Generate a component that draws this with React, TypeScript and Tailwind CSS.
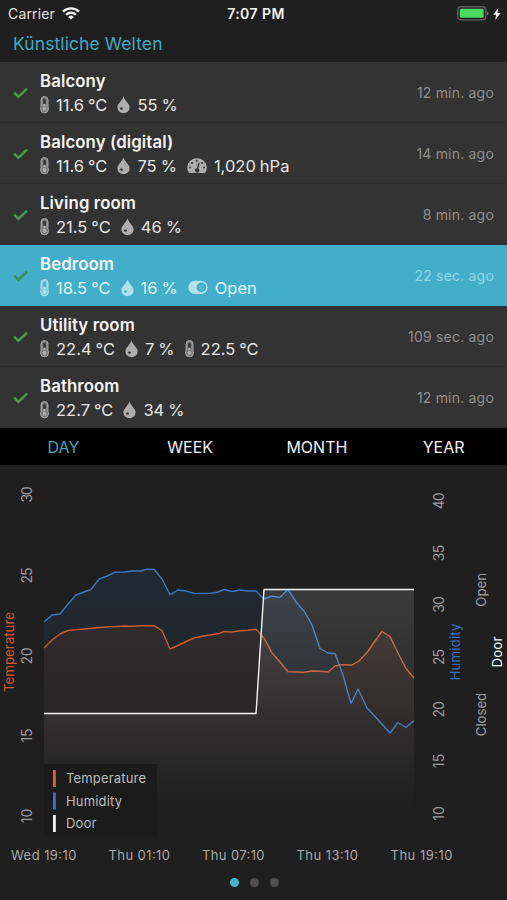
import React from "react";

type Kind = "temp" | "drop" | "gauge" | "toggle";
type Reading = { kind: Kind; text: string };
type Room = { name: string; ago: string; readings: Reading[]; selected?: boolean };

const rooms: Room[] = [
  { name: "Balcony", ago: "12 min. ago", readings: [{ kind: "temp", text: "11.6 °C" }, { kind: "drop", text: "55 %" }] },
  {
    name: "Balcony (digital)",
    ago: "14 min. ago",
    readings: [{ kind: "temp", text: "11.6 °C" }, { kind: "drop", text: "75 %" }, { kind: "gauge", text: "1,020 hPa" }],
  },
  { name: "Living room", ago: "8 min. ago", readings: [{ kind: "temp", text: "21.5 °C" }, { kind: "drop", text: "46 %" }] },
  {
    name: "Bedroom",
    ago: "22 sec. ago",
    selected: true,
    readings: [{ kind: "temp", text: "18.5 °C" }, { kind: "drop", text: "16 %" }, { kind: "toggle", text: "Open" }],
  },
  {
    name: "Utility room",
    ago: "109 sec. ago",
    readings: [{ kind: "temp", text: "22.4 °C" }, { kind: "drop", text: "7 %" }, { kind: "temp", text: "22.5 °C" }],
  },
  { name: "Bathroom", ago: "12 min. ago", readings: [{ kind: "temp", text: "22.7 °C" }, { kind: "drop", text: "34 %" }] },
];

function Icon({ kind, selected }: { kind: Kind; selected?: boolean }) {
  const fg = selected ? "#b4e1eb" : "#adadad";
  const bg = selected ? "#42aeca" : "#333333";
  if (kind === "temp")
    return (
      <svg width="9" height="18" viewBox="0 0 9 18" fill="none">
        <path d="M1 4a3.5 3.5 0 0 1 7 0v6.6a4 4 0 0 1 .4 2.4a3.9 3.9 0 0 1-7.8 0a4 4 0 0 1 .4-2.4z" fill={fg} fillOpacity="0.65" stroke={fg} strokeWidth="0.9" />
        <path d="M4.5 4v3.4" stroke={bg} strokeWidth="2.6" strokeLinecap="round" />
        <path d="M4.5 7.8v4" stroke={fg} strokeWidth="1.8" />
        <circle cx="4.5" cy="12.9" r="2.4" fill={fg} stroke={bg} strokeOpacity="0.5" strokeWidth="0.7" />
      </svg>
    );
  if (kind === "drop")
    return (
      <svg width="13" height="18" viewBox="0 0 13 18">
        <path d="M6.5 0.2C7.3 4.4 12.6 7.4 12.6 11.2a6.1 6.1 0 0 1-12.2 0C.4 7.4 5.7 4.4 6.5.2z" fill={fg} />
        <path d="M3 11.4a1.6 1.6 0 1 0 3 1.4c-.2-1-.8-1.3-1.5-1.2s-1.100.1-1.5-.2z" fill={bg} />
      </svg>
    );
  if (kind === "gauge")
    return (
      <svg width="20" height="18" viewBox="0 0 20 18">
        <path d="M1.8 15.8A9.8 9.4 0 1 1 18.2 15.8Q18 16.1 17.6 16.1H2.4Q2 16.1 1.8 15.8z" fill={fg} />
        <g fill={bg}>
          <circle cx="3" cy="10.6" r="1" />
          <circle cx="5" cy="6" r="1" />
          <circle cx="9.7" cy="3.8" r="1" />
          <circle cx="15" cy="6" r="1" />
          <circle cx="17" cy="10.6" r="1" />
          <path d="M11.5 5.4l1.2.3-1.4 5.8a2.2 2.2 0 1 1-1.4-.3z" />
        </g>
      </svg>
    );
  return (
    <svg width="20" height="18" viewBox="0 0 20 18">
      <rect x="0.3" y="1.8" width="19.4" height="13.2" rx="6.6" fill={fg} />
      <circle cx="13.4" cy="8.4" r="4.8" fill={bg} />
      <circle cx="13.4" cy="8.4" r="3.1" fill={fg} fillOpacity="0.15" />
    </svg>
  );
}

function RoomRow({ room }: { room: Room }) {
  return (
    <div
      className={
        "flex flex-1 items-center border-b pl-[13px] pr-[13px] " +
        (room.selected ? "border-[#42aeca] bg-[#42aeca]" : "border-[#2c2c2c] bg-[#333333]")
      }
    >
      <svg width="16" height="12" viewBox="0 0 16 12" className="mt-px shrink-0" fill="none">
        <path d="M1.2 5.6L5.4 9.8L14 1.6" stroke={room.selected ? "#388e55" : "#479a4e"} strokeWidth="2.5" />
      </svg>
      <div className="ml-[11px] mt-px flex flex-1 flex-col">
        <div className="h-[24px] text-[16.8px] font-semibold leading-[26px] tracking-[0.1px] text-[#f4f4f4]">{room.name}</div>
        <div className="flex h-[25px] items-center gap-[10px]">
          {room.readings.map((r, i) => (
            <div key={i} className="flex items-center gap-[7px]">
              <Icon kind={r.kind} selected={room.selected} />
              <span
                className={
                  "whitespace-nowrap text-[16.5px] leading-[24px] [word-spacing:-0.6px] " +
                  (room.selected ? "text-[#e2f5f9]" : "text-[#e6e6e6]")
                }
              >
                {r.text}
              </span>
            </div>
          ))}
        </div>
      </div>
      <div className={"mt-px text-[14px] tracking-[0.2px] " + (room.selected ? "text-[#94d6e5]" : "text-[#8f8f8f]")}>{room.ago}</div>
    </div>
  );
}

const temperature =
  "44,648 52,640 60,634 68,630.5 76,629.6 84,629 92,628.3 100,627.5 108,626.8 116,626.5 124,626 132,626.3 140,625.8 154,625.6 162,630.5 170,649 178,645.5 186,641.5 194,638 202,636.3 210,635 218,633.8 224,631.5 232,632 240,630.8 248,630.3 256,629.3 264,638 272,653 280,662 288,671.8 304,672.2 312,671 320,671.2 328,672 335,666 342,664.6 352,665 359,661 367,652.5 375,641 382,631.5 390,636.5 398,653 406,668.5 414,678";
const humidity =
  "44,622 52,615 60,614 68,604 76,595 84,592 91,589.5 99,579 107,576 115,572.3 124,572 132,571 140,571 147,569.3 154,569.3 162,579 170,594.8 178,590 186,591 194,593.4 210,593.4 218,592 224,589.5 232,591.5 240,590 248,591 256,591 264,599 272,596 280,597.5 288,589.5 296,602 304,611 312,625 320,648.5 328,653 335,653.5 343,675 351,703.5 358,689 367,708 382,724 390,733 398,722.5 406,727.5 414,720.5";
const door = "44,713.5 256,713.5 264,589.5 414,589.5";

function VLabel({ x, y, w, fill, text, size = 14 }: { x: number; y: number; w: number; fill: string; text: string; size?: number }) {
  return (
    <text transform={`translate(${x} ${y}) rotate(-90)`} textAnchor="middle" textLength={w} fontSize={size} fill={fill}>
      {text}
    </text>
  );
}

function Chart() {
  const series = [
    { pts: humidity, color: "#3b77bd", id: "hum" },
    { pts: temperature, color: "#c25c36", id: "tmp" },
    { pts: door, color: "#f2f2f2", id: "door" },
  ];
  return (
    <svg width="507" height="405" viewBox="0 465 507 405" className="block">
      <defs>
        <linearGradient id="hum" gradientUnits="userSpaceOnUse" x1="0" y1="569" x2="0" y2="800">
          <stop offset="0" stopColor="#2a6ab0" stopOpacity="0.14" />
          <stop offset="1" stopColor="#2a6ab0" stopOpacity="0" />
        </linearGradient>
        <linearGradient id="tmp" gradientUnits="userSpaceOnUse" x1="0" y1="625" x2="0" y2="800">
          <stop offset="0" stopColor="#d0502c" stopOpacity="0.1" />
          <stop offset="1" stopColor="#d0502c" stopOpacity="0" />
        </linearGradient>
        <linearGradient id="door" gradientUnits="userSpaceOnUse" x1="0" y1="589" x2="0" y2="815">
          <stop offset="0" stopColor="#ffffff" stopOpacity="0.125" />
          <stop offset="0.55" stopColor="#ffffff" stopOpacity="0.05" />
          <stop offset="1" stopColor="#ffffff" stopOpacity="0" />
        </linearGradient>
      </defs>
      {series.map((s) => (
        <g key={s.id}>
          <polygon points={`44,836 ${s.pts} 414,836`} fill={`url(#${s.id})`} />
          <polyline points={s.pts} fill="none" stroke={s.color} strokeWidth="1.4" strokeLinejoin="round" />
        </g>
      ))}
      <rect x="44" y="764" width="113" height="73" fill="#1b1b1b" fillOpacity="0.9" />
      <g fontSize="13" fill="#bdbdbd">
        <rect x="53" y="770" width="2.8" height="17" fill="#dd6236" />
        <text x="66" y="783.3" textLength="80">Temperature</text>
        <rect x="53" y="792.5" width="2.8" height="17" fill="#3874c4" />
        <text x="66" y="805.6" textLength="56">Humidity</text>
        <rect x="53" y="815" width="2.8" height="17" fill="#f2f2f2" />
        <text x="66" y="828" textLength="30.5">Door</text>
      </g>
      <g fontSize="13" fill="#a8a8a8">
        <text x="11" y="859.5" textLength="65.5">Wed 19:10</text>
        <text x="108.5" y="859.5" textLength="61.5">Thu 01:10</text>
        <text x="202" y="859.5" textLength="62.5">Thu 07:10</text>
        <text x="296.5" y="859.5" textLength="61.5">Thu 13:10</text>
        <text x="390.5" y="859.5" textLength="62">Thu 19:10</text>
      </g>
      {[["30", 494.5, 16], ["25", 575.5, 16], ["20", 656, 17], ["15", 735.5, 14], ["10", 816, 14.5]].map(([t, y, w]) => (
        <VLabel key={t} x={32} y={y as number} w={w as number} text={t as string} fill="#9c9c9c" />
      ))}
      {[["40", 500.8, 17], ["35", 553, 16.5], ["30", 604.5, 16.5], ["25", 657, 16], ["20", 709.3, 16.5], ["15", 761, 14.5], ["10", 813.5, 14.5]].map(([t, y, w]) => (
        <VLabel key={t} x={443.5} y={y as number} w={w as number} text={t as string} fill="#9c9c9c" />
      ))}
      <VLabel x={14} y={652} w={80} text="Temperature" fill="#cc5a30" size={13.3} />
      <VLabel x={460} y={652} w={57} text="Humidity" fill="#3474b8" size={13.3} />
      <VLabel x={486} y={589.8} w={34} text="Open" fill="#a0a0a0" size={13.3} />
      <VLabel x={486} y={714.5} w={43.5} text="Closed" fill="#a0a0a0" size={13.3} />
      <VLabel x={502} y={652} w={31} text="Door" fill="#f2f2f2" size={13.3} />
    </svg>
  );
}

export default function App() {
  return (
    <div className="flex h-[900px] w-[507px] flex-col overflow-hidden bg-[#1f1f1f] font-['Inter','Liberation_Sans',sans-serif]">
      <div className="grid h-[27px] shrink-0 grid-cols-3 items-center pl-[8px] pr-[6px] text-[14px] leading-[27px] text-[#e2e2e2]">
        <div className="flex items-center gap-[7px]">
          <span className="tracking-[0.15px]">Carrier</span>
          <svg width="18" height="13" viewBox="0 0 18 13" fill="none" stroke="#f4f4f4" strokeWidth="2.3">
            <path d="M1 4.6a11.4 11.4 0 0 1 16 0" />
            <path d="M4 7.8a7.1 7.1 0 0 1 10 0" />
            <path d="M9 12.6L6.2 9.9a4 4 0 0 1 5.6 0z" fill="#f4f4f4" stroke="none" />
          </svg>
        </div>
        <div className="pl-[3px] text-center font-semibold tracking-[0.45px] text-[#f2f2f2]">7:07 PM</div>
        <div className="flex items-center justify-end gap-[4px]">
          <svg width="32" height="15" viewBox="0 0 32 15">
            <rect x="0.7" y="0.7" width="28" height="13.2" rx="3.2" fill="none" stroke="#5c5f5c" strokeWidth="1.4" />
            <rect x="2.8" y="2.8" width="23.8" height="9" rx="1" fill="#4cd964" />
            <path d="M30 5q1.6.7 1.6 2.3T30 9.6z" fill="#6a6a6a" />
          </svg>
          <svg width="8" height="12" viewBox="0 0 8 12">
            <path d="M5.2 0L0.3 6.8h2.9L2.2 12 7.6 5H4.5z" fill="#f4f4f4" />
          </svg>
        </div>
      </div>
      <div className="h-[35px] shrink-0 pl-[13px] text-[17.5px] leading-[34px] tracking-[0.1px] text-[#40a9c0]">Künstliche Welten</div>
      <div className="flex h-[366px] shrink-0 flex-col">
        {rooms.map((r) => (
          <RoomRow key={r.name} room={r} />
        ))}
      </div>
      <div className="grid h-[37px] shrink-0 grid-cols-4 bg-black text-center text-[16px] leading-[38px] text-[#f2f2f2]">
        <span className="text-[#40a9c0]">DAY</span>
        <span>WEEK</span>
        <span>MONTH</span>
        <span>YEAR</span>
      </div>
      <Chart />
      <div className="flex h-[24px] items-center justify-center gap-[11px] pl-[1px]">
        <span className="size-[9px] rounded-full bg-[#3fb4cb]" />
        <span className="size-[9px] rounded-full bg-[#505050]" />
        <span className="size-[9px] rounded-full bg-[#505050]" />
      </div>
    </div>
  );
}
